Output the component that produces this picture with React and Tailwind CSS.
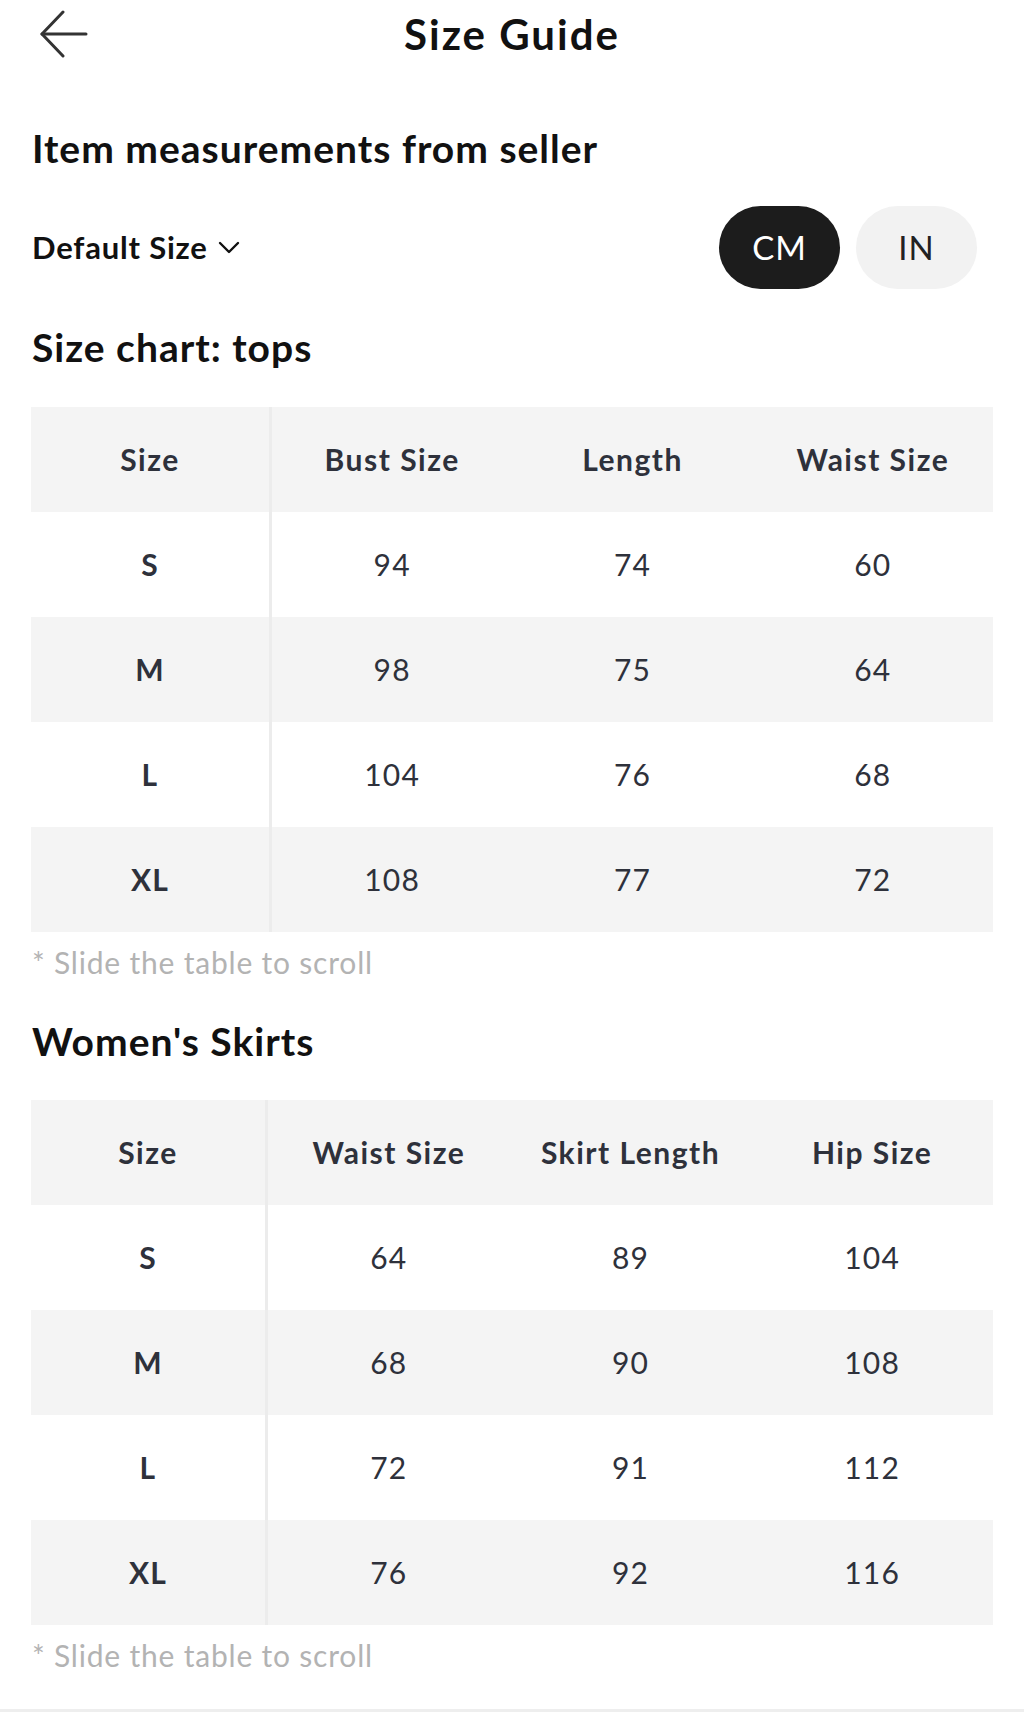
import React from "react";

const tops = {
  cols: "grid grid-cols-[241px_1fr_1fr_1fr]",
  headers: ["Size", "Bust Size", "Length", "Waist Size"],
  rows: [
    ["S", "94", "74", "60"],
    ["M", "98", "75", "64"],
    ["L", "104", "76", "68"],
    ["XL", "108", "77", "72"],
  ],
};

const skirts = {
  cols: "grid grid-cols-[237px_1fr_1fr_1fr]",
  headers: ["Size", "Waist Size", "Skirt Length", "Hip Size"],
  rows: [
    ["S", "64", "89", "104"],
    ["M", "68", "90", "108"],
    ["L", "72", "91", "112"],
    ["XL", "76", "92", "116"],
  ],
};

function BackArrow() {
  return (
    <svg width="48" height="48" viewBox="0 0 48 48" fill="none" stroke="#333" strokeWidth="3" strokeLinecap="round" strokeLinejoin="round">
      <path d="M2 24 H46" />
      <path d="M23 2 L2 24 L23 46" />
    </svg>
  );
}

function Chevron() {
  return (
    <svg width="22" height="13" viewBox="0 0 22 13" fill="none" stroke="#111" strokeWidth="2.4" strokeLinecap="round" strokeLinejoin="round">
      <path d="M2 2 L11 11 L20 2" />
    </svg>
  );
}

function SizeTable({ data }) {
  return (
    <div className="flex flex-col text-[#2e313b]">
      {/* header */}
      <div className={`${data.cols} h-[105px] bg-[#f4f4f4]`}>
        {data.headers.map((h, i) => (
          <div
            key={h}
            className={`flex items-center justify-center text-[30px] font-bold tracking-[1.5px] ${i === 0 ? "border-r-[3px] border-[#ececec]" : ""}`}
          >
            {h}
          </div>
        ))}
      </div>
      {data.rows.map((row, r) => (
        <div key={row[0]} className={`${data.cols} h-[105px] ${r % 2 === 1 ? "bg-[#f4f4f4]" : "bg-white"}`}>
          {row.map((v, i) => (
            <div
              key={i}
              className={`flex items-center justify-center text-[30px] tracking-[1.2px] ${i === 0 ? "font-bold border-r-[3px] border-[#ececec]" : "font-normal"}`}
            >
              {v}
            </div>
          ))}
        </div>
      ))}
    </div>
  );
}

function Hint() {
  return <p className="text-[30px] leading-[36px] tracking-[0.8px] text-[#b3b3b3] pl-[1px]">* Slide the table to scroll</p>;
}

export default function App() {
  return (
    <div className="w-[1024px] h-[1712px] bg-white font-['Lato','Liberation_Sans',sans-serif] text-[#111] flex flex-col border-b-[3px] border-[#eeeeee]">
      {/* top bar */}
      <div className="grid grid-cols-[1fr_auto_1fr] items-center h-[68px] px-[40px]">
        <div className="flex items-center">
          <BackArrow />
        </div>
        <h1 className="text-[42px] font-bold leading-none text-[#111] tracking-[2px]">Size Guide</h1>
        <div />
      </div>

      <div className="flex flex-col px-[31px]">
        <h2 className="mt-[58px] text-[39px] font-bold leading-[44px] tracking-[1px] pl-[1px]">Item measurements from seller</h2>

        <div className="mt-[36px] flex items-center justify-between h-[83px]">
          <button className="flex items-center gap-[10px] pl-[1px]">
            <span className="text-[31px] font-bold tracking-[0.8px]">Default Size</span>
            <Chevron />
          </button>
          <div className="flex items-center gap-[16px] pr-[16px]">
            <div className="w-[121px] h-[83px] rounded-full bg-[#1c1c1c] text-white flex items-center justify-center text-[33px] tracking-[1px]">
              CM
            </div>
            <div className="w-[121px] h-[83px] rounded-full bg-[#f2f2f2] text-[#222] flex items-center justify-center text-[33px] tracking-[1px]">
              IN
            </div>
          </div>
        </div>

        <h2 className="mt-[36px] text-[39px] font-bold leading-[44px] tracking-[1px] pl-[1px]">Size chart: tops</h2>

        <div className="mt-[38px]">
          <SizeTable data={tops} />
        </div>
        <div className="mt-[12px]">
          <Hint />
        </div>

        <h2 className="mt-[39px] text-[39px] font-bold leading-[44px] tracking-[1px] pl-[1px]">Women's Skirts</h2>

        <div className="mt-[37px]">
          <SizeTable data={skirts} />
        </div>
        <div className="mt-[12px]">
          <Hint />
        </div>
      </div>
    </div>
  );
}
